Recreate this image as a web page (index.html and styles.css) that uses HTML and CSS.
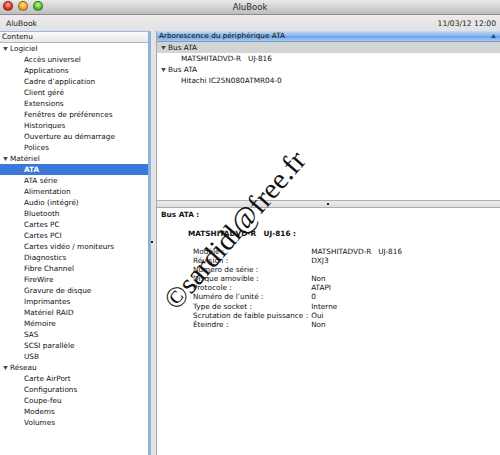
FILE: index.html
```html
<!DOCTYPE html>
<html lang="fr">
<head>
<meta charset="utf-8">
<title>AluBook</title>
<link rel="stylesheet" href="styles.css">
</head>
<body>
<div class="window">
  <div class="titlebar">
    <div class="lights">
      <span class="light red"></span>
      <span class="light yellow"></span>
      <span class="light green"></span>
    </div>
    <div class="title">AluBook</div>
  </div>
  <div class="toolbar">
    <span class="machine">AluBook</span>
    <span class="date">11/03/12 12:00</span>
  </div>
  <div class="main">
    <div class="sidebar">
      <div class="colhead">Contenu</div>
      <ul class="list">
        <li class="group"><svg class="tri" viewBox="0 0 6 5"><path d="M0 0H6L3 5Z"/></svg>Logiciel</li>
        <li class="item">Accès universel</li>
        <li class="item">Applications</li>
        <li class="item">Cadre d’application</li>
        <li class="item">Client géré</li>
        <li class="item">Extensions</li>
        <li class="item">Fenêtres de préférences</li>
        <li class="item">Historiques</li>
        <li class="item">Ouverture au démarrage</li>
        <li class="item">Polices</li>
        <li class="group"><svg class="tri" viewBox="0 0 6 5"><path d="M0 0H6L3 5Z"/></svg>Matériel</li>
        <li class="item selected">ATA</li>
        <li class="item">ATA série</li>
        <li class="item">Alimentation</li>
        <li class="item">Audio (intégré)</li>
        <li class="item">Bluetooth</li>
        <li class="item">Cartes PC</li>
        <li class="item">Cartes PCI</li>
        <li class="item">Cartes vidéo / moniteurs</li>
        <li class="item">Diagnostics</li>
        <li class="item">Fibre Channel</li>
        <li class="item">FireWire</li>
        <li class="item">Gravure de disque</li>
        <li class="item">Imprimantes</li>
        <li class="item">Matériel RAID</li>
        <li class="item">Mémoire</li>
        <li class="item">SAS</li>
        <li class="item">SCSI parallèle</li>
        <li class="item">USB</li>
        <li class="group"><svg class="tri" viewBox="0 0 6 5"><path d="M0 0H6L3 5Z"/></svg>Réseau</li>
        <li class="item">Carte AirPort</li>
        <li class="item">Configurations</li>
        <li class="item">Coupe-feu</li>
        <li class="item">Modems</li>
        <li class="item">Volumes</li>
      </ul>
    </div>
    <div class="vsplit"><span class="dimple"></span></div>
    <div class="content">
      <div class="tree">
        <div class="colhead active">
          <span>Arborescence du périphérique ATA</span>
          <svg class="sort" viewBox="0 0 6 5"><path d="M3 0L6 5H0Z"/></svg>
        </div>
        <ul class="list">
          <li class="group hl"><svg class="tri" viewBox="0 0 6 5"><path d="M0 0H6L3 5Z"/></svg>Bus ATA</li>
          <li class="item">MATSHITADVD-R&nbsp;&nbsp;&nbsp;UJ-816</li>
          <li class="group"><svg class="tri" viewBox="0 0 6 5"><path d="M0 0H6L3 5Z"/></svg>Bus ATA</li>
          <li class="item">Hitachi IC25N080ATMR04-0</li>
        </ul>
      </div>
      <div class="hsplit"><span class="dimple"></span></div>
      <div class="detail">
        <div class="d-title">Bus ATA :</div>
        <div class="d-device">MATSHITADVD-R&nbsp;&nbsp;&nbsp;UJ-816 :</div>
        <dl class="props">
          <dt>Modèle :</dt><dd>MATSHITADVD-R&nbsp;&nbsp;&nbsp;UJ-816</dd>
          <dt>Révision :</dt><dd>DXJ3</dd>
          <dt>Numéro de série :</dt><dd></dd>
          <dt>Disque amovible :</dt><dd>Non</dd>
          <dt>Protocole :</dt><dd>ATAPI</dd>
          <dt>Numéro de l’unité :</dt><dd>0</dd>
          <dt>Type de socket :</dt><dd>Interne</dd>
          <dt>Scrutation de faible puissance :</dt><dd>Oui</dd>
          <dt>Éteindre :</dt><dd>Non</dd>
        </dl>
      </div>
    </div>
  </div>
  <div class="watermark">©sardidl@free.fr</div>
</div>
</body>
</html>
```
FILE: styles.css
```css
* { box-sizing: border-box; }
html, body { margin: 0; padding: 0; }
body {
  width: 500px;
  height: 455px;
  overflow: hidden;
  font-family: "DejaVu Sans", "Noto Sans", sans-serif;
  font-size: 7.3px;
  color: #111;
  background: #e6e6e6;
}
.window {
  position: relative;
  width: 500px;
  height: 455px;
  display: flex;
  flex-direction: column;
}
.titlebar {
  height: 14px;
  flex: none;
  position: relative;
  background: linear-gradient(#e9e9e9, #bdbdbd);
  display: flex;
  align-items: center;
  justify-content: center;
}
.lights {
  position: absolute;
  left: 3px;
  top: 1px;
  display: flex;
  gap: 5px;
}
.light {
  width: 10px;
  height: 10px;
  border-radius: 50%;
  border: 1px solid rgba(0,0,0,0.35);
}
.red { background: radial-gradient(circle at 50% 35%, #ffb0a0, #e0362a 55%, #a81a12); }
.yellow { background: radial-gradient(circle at 50% 35%, #ffe6a0, #f3a52a 55%, #b86a10); }
.green { background: radial-gradient(circle at 50% 35%, #c8f5a8, #5cc034 55%, #2e8218); }
.title {
  font-size: 8.5px;
  color: #2a2a2a;
}
.toolbar {
  height: 17px;
  flex: none;
  background: linear-gradient(#ececec, #e2e2e2);
  border-top: 1px solid #8a8a8a;
  display: flex;
  align-items: center;
  justify-content: space-between;
  padding: 0 4px 0 6px;
  font-size: 7.6px;
  color: #222;
}
.main {
  flex: 1;
  display: flex;
  min-height: 0;
}
.sidebar {
  width: 151px;
  flex: none;
  background: #fff;
  border: 1px solid #9db8e2;
  border-left: 0;
  border-right: 3px solid #90b0e0;
  border-bottom: 0;
}
.colhead {
  height: 11px;
  line-height: 10px;
  padding-left: 2px;
  background: linear-gradient(#fbfbfb, #e8e8e8);
  border-bottom: 1px solid #b4b4b4;
  color: #111;
  display: flex;
  justify-content: space-between;
  align-items: center;
}
.colhead.active {
  background: linear-gradient(#c5dcf7 0%, #8ab6ec 45%, #6ea4e6 55%, #a9caf2 100%);
  border-bottom: 1px solid #7c9cc8;
  padding-right: 4px;
}
.sort { width: 5px; height: 4px; fill: #2b4a78; }
.list {
  list-style: none;
  margin: 0;
  padding: 0;
}
.list li {
  height: 11px;
  line-height: 11px;
  white-space: nowrap;
}
.group {
  padding-left: 3px;
  display: flex;
  align-items: center;
}
.tri {
  width: 5px;
  height: 4px;
  fill: #4a4a4a;
  margin-right: 2px;
}
.sidebar .item { padding-left: 24px; }
.item.selected {
  background: #3b79d9;
  color: #fff;
  font-weight: bold;
}
.vsplit {
  width: 6px;
  flex: none;
  position: relative;
  background: #e4e4e4;
  border-right: 1px solid #a9a9a9;
}
.vsplit .dimple {
  position: absolute;
  left: 0;
  top: 210px;
  width: 2px;
  height: 2px;
  background: #222;
}
.content {
  flex: 1;
  display: flex;
  flex-direction: column;
  min-width: 0;
}
.tree {
  height: 170px;
  flex: none;
  background: #fff;
  border-bottom: 1px solid #b0b0b0;
}
.tree .group { padding-left: 4px; }
.tree .group.hl { background: #d4d4d4; }
.tree .item { padding-left: 24px; }
.hsplit {
  height: 7px;
  flex: none;
  position: relative;
  background: linear-gradient(#ececec, #dcdcdc);
  border-bottom: 1px solid #a9a9a9;
}
.hsplit .dimple {
  position: absolute;
  left: 170px;
  top: 2px;
  width: 2px;
  height: 2px;
  background: #222;
}
.detail {
  flex: 1;
  background: #fff;
  padding: 2px 0 0 4px;
}
.d-title {
  font-weight: bold;
  line-height: 9px;
}
.d-device {
  font-weight: bold;
  line-height: 9px;
  margin: 10px 0 0 27px;
}
.props {
  display: grid;
  grid-template-columns: max-content auto;
  column-gap: 3px;
  margin: 9px 0 0 32px;
  line-height: 9.1px;
}
.props dt, .props dd { margin: 0; white-space: nowrap; min-height: 9.1px; }
.watermark {
  position: absolute;
  left: 169px;
  top: 288px;
  font-family: "Liberation Serif", serif;
  font-size: 29px;
  line-height: 34px;
  color: #111;
  transform: rotate(-49deg);
  transform-origin: 0 50%;
  white-space: nowrap;
  pointer-events: none;
}
```
